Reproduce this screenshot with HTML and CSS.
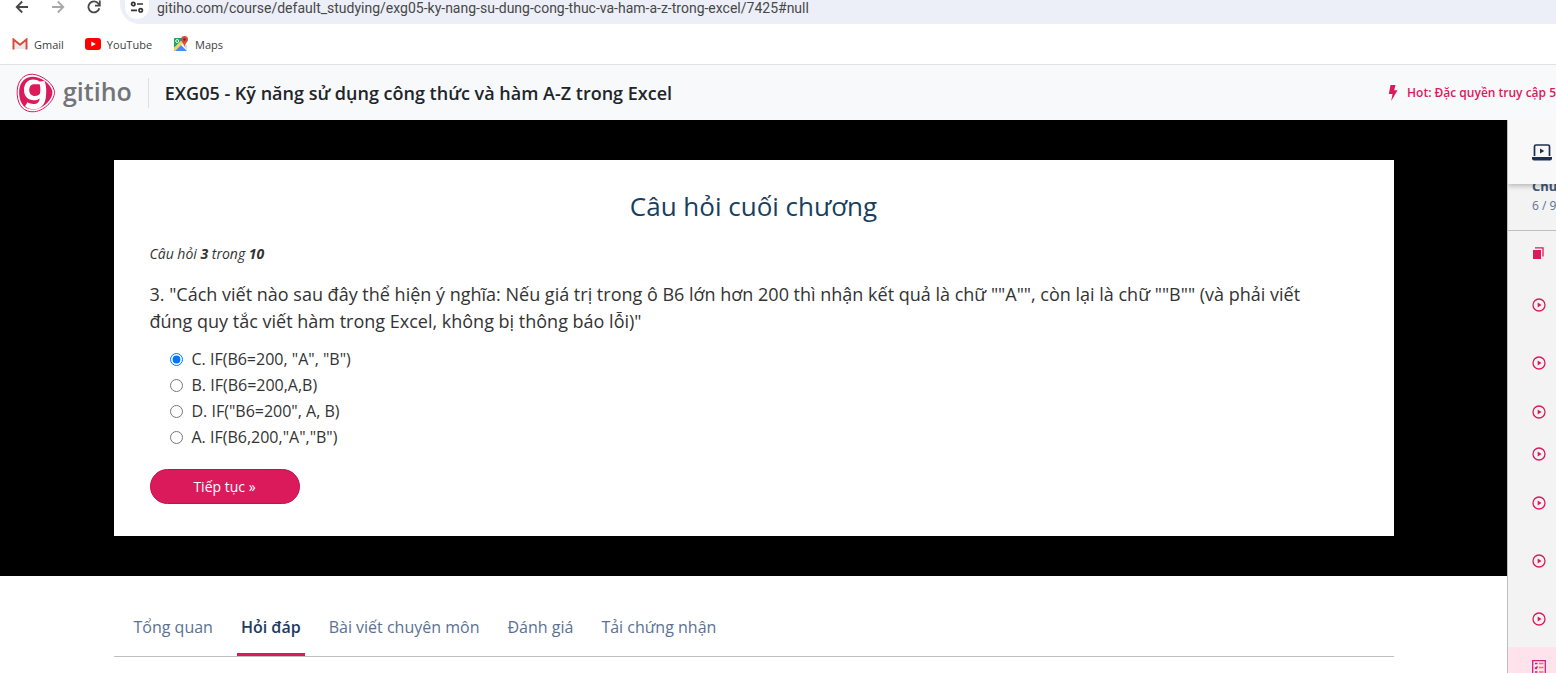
FILE: index.html
```
<!DOCTYPE html>
<html lang="vi">
<head>
  <meta charset="UTF-8">
  <meta name="viewport" content="width=device-width, initial-scale=1.0">
  <title>EXG05 - Kỹ năng sử dụng công thức và hàm A-Z trong Excel</title>
  <link rel="stylesheet" href="styles.css">
</head>
<body>

  <!-- shared icon -->
  <svg class="sprite" aria-hidden="true">
    <symbol id="play" viewBox="0 0 14 14">
      <circle cx="7" cy="7" r="6" fill="none" stroke="#db1a5b" stroke-width="1.3"/>
      <path d="M5.700 4.400 9.500 7 5.700 9.600z" fill="#db1a5b"/>
    </symbol>
  </svg>

  <div class="browser">
    <div class="toolbar">
      <button class="nav-btn" aria-label="Back">
        <svg width="14" height="14" viewBox="0 0 14 14" fill="none" stroke="#474747" stroke-width="1.8"><path d="M13 7H2M7.200 1.500 1.700 7l5.500 5.500"/></svg>
      </button>
      <button class="nav-btn" aria-label="Forward">
        <svg width="14" height="14" viewBox="0 0 14 14" fill="none" stroke="#a8a8a8" stroke-width="1.8"><path d="M1 7h11M6.800 1.500 12.300 7l-5.500 5.500"/></svg>
      </button>
      <button class="nav-btn" aria-label="Reload">
        <svg width="14" height="14" viewBox="0 0 14 14" fill="none" stroke="#474747" stroke-width="1.8"><path d="M12.300 8.200A5.500 5.500 0 1 1 11.400 3.700L12.600 5"/><path d="M12.800.6v5H8"/></svg>
      </button>
      <div class="address">
        <button class="site-info" aria-label="Site information">
          <svg width="14" height="14" viewBox="0 0 14 14" fill="none" stroke="#333" stroke-width="1.7"><circle cx="3.300" cy="4" r="1.700"/><path d="M7 4h6M1 10.300h6"/><circle cx="10.700" cy="10.300" r="1.700"/></svg>
        </button>
        <input class="url" type="text" aria-label="Address" value="gitiho.com/course/default_studying/exg05-ky-nang-su-dung-cong-thuc-va-ham-a-z-trong-excel/7425#null">
      </div>
    </div>
    <div class="bookmarks">
      <a href="#">
        <svg width="16" height="12" viewBox="0 0 16 12"><path d="M3 4v7h10V4L8 8z" fill="#eceaea"/><path d="M1.500 11.500V1.500L8 6.800l6.500-5.300v10" fill="none" stroke="#d54b3d" stroke-width="2"/></svg>
        Gmail
      </a>
      <a href="#">
        <svg width="16" height="12" viewBox="0 0 16 12"><rect width="16" height="12" rx="3" fill="#f00"/><path d="M6.300 3.400v5.200L10.800 6z" fill="#fff"/></svg>
        YouTube
      </a>
      <a href="#">
        <svg width="16" height="16" viewBox="0 0 16 16"><rect x="1" y="2" width="13" height="13" rx="1" fill="#fff"/><path d="M2 2h9L1 12V3a1 1 0 0 1 1-1z" fill="#1fa463"/><path d="M1 12 10.500 3l1.500 2L2 15H1z" fill="#ffd04b"/><path d="m2 15 6-6 6 6z" fill="#4889f4"/><path d="m9 8 2-1.500 3 3V14z" fill="#dadada"/><circle cx="4.200" cy="5" r="1.500" fill="none" stroke="#fff" stroke-width=".9"/><path d="M11.500 0A3.500 3.500 0 0 0 8 3.500C8 6.200 11 7 11.500 11 12 7 15 6.200 15 3.500A3.500 3.500 0 0 0 11.500 0z" fill="#d84c3e"/><circle cx="11.500" cy="3.500" r="1.300" fill="#7c2a20"/></svg>
        Maps
      </a>
    </div>
  </div>

  <header class="course-header">
    <a class="logo" href="#" aria-label="gitiho">
      <svg width="40" height="40" viewBox="0 0 40 40">
        <path d="M13 1.500C21-.5 36 8 38.300 17.500 40 26 29 37.500 18.500 38.700 8.500 39.500 2 33.500 1.200 21.500.6 10.500 5 3.300 13 1.500z" fill="#fff" stroke="#db1a5b" stroke-width="1"/>
        <path d="M14 4C22 2 34.500 9.500 36.300 18 37.500 25.500 28 35.500 18.500 36.500 10 37.300 4 32 3.200 21.500 2.700 11.500 6.500 5.700 14 4z" fill="#db1a5b"/>
        <path d="M17 6.500c2.800 0 5 .7 6.700 2L28.500 8c1.800 4 2 9 1.500 15-.6 8-4.500 13-12 13.300-3.500.1-6.500-.8-9-3l2.500-4c2 1.300 4 1.800 6.500 1.700 3.500-.1 5.300-2 5.700-5.600-1.600 1.300-3.600 1.900-5.700 1.900-6 0-10-4-10-10.300S11.500 6.500 17 6.500z" fill="#fff"/>
        <path d="M17.500 11.300h6.200c.8 3.200.8 6.500.2 9.500-1.200 1.400-3 2.200-5 2.200-3.300 0-5.700-2.300-5.700-6 0-3.300 1.600-5.500 4.300-5.700z" fill="#db1a5b"/>
      </svg>
      <span class="logo-text">gitiho</span>
    </a>
    <h1 class="course-title">EXG05 - Kỹ năng sử dụng công thức và hàm A-Z trong Excel</h1>
    <a class="hot" href="#">
      <svg width="10" height="16" viewBox="0 0 10 16"><path d="M2.500 0h5L6.200 5.200H9.500L3.200 16 4.500 9H.8z" fill="#db1a5b"/></svg>
      Hot: Đặc quyền truy cập 5
    </a>
  </header>

  <div class="layout">
    <main class="main">
      <section class="stage">
        <form class="quiz">
          <h2>Câu hỏi cuối chương</h2>
          <p class="progress">Câu hỏi <b>3</b> trong <b>10</b></p>
          <fieldset>
            <legend>3. "Cách viết nào sau đây thể hiện ý nghĩa: Nếu giá trị trong ô B6 lớn hơn 200 thì nhận kết quả là chữ ""A"", còn lại là chữ ""B"" (và phải viết đúng quy tắc viết hàm trong Excel, không bị thông báo lỗi)"</legend>
            <label><input type="radio" name="answer" checked> C. IF(B6=200, "A", "B")</label>
            <label><input type="radio" name="answer"> B. IF(B6=200,A,B)</label>
            <label><input type="radio" name="answer"> D. IF("B6=200", A, B)</label>
            <label><input type="radio" name="answer"> A. IF(B6,200,"A","B")</label>
          </fieldset>
          <button class="next" type="button">Tiếp tục »</button>
        </form>
      </section>
      <nav class="tabs">
        <a href="#">Tổng quan</a>
        <a href="#" class="active">Hỏi đáp</a>
        <a href="#">Bài viết chuyên môn</a>
        <a href="#">Đánh giá</a>
        <a href="#">Tải chứng nhận</a>
      </nav>
    </main>

    <aside class="sidebar">
      <div class="sidebar-head">
        <svg width="20" height="17" viewBox="0 0 20 17"><path d="M2.500 12V2.500A1.500 1.500 0 0 1 4 1h12a1.500 1.500 0 0 1 1.500 1.500V12" fill="none" stroke="#1f2f4d" stroke-width="1.700"/><path d="M0 13h20v1.500a2 2 0 0 1-2 2H2a2 2 0 0 1-2-2z" fill="#1f2f4d"/><path d="M8 4.500v5L12.300 7z" fill="#1f2f4d"/></svg>
      </div>
      <div class="chapter">
        <b>Chư</b>
        <span>6 / 9</span>
      </div>
      <ul class="lessons">
        <li><svg width="14" height="14" viewBox="0 0 14 14"><path d="M1 3h8v9H1z" fill="#db1a5b"/><path d="M3 .9h8v8.600" fill="none" stroke="#db1a5b" stroke-width="1.300"/></svg></li>
        <li class="long"><svg width="14" height="14"><use href="#play"/></svg></li>
        <li class="medium"><svg width="14" height="14"><use href="#play"/></svg></li>
        <li><svg width="14" height="14"><use href="#play"/></svg></li>
        <li><svg width="14" height="14"><use href="#play"/></svg></li>
        <li class="medium"><svg width="14" height="14"><use href="#play"/></svg></li>
        <li class="long"><svg width="14" height="14"><use href="#play"/></svg></li>
        <li class="medium"><svg width="14" height="14"><use href="#play"/></svg></li>
        <li class="current"><svg width="14" height="16" viewBox="0 0 14 16" fill="none"><path d="M.7.7h12.600v14.600H.7z" stroke="#d11c86" stroke-width="1.300"/><path d="M3 3.500h2.500M3 7.500l1 1 1.500-2M3 12h2.500" stroke="#db1a5b" stroke-width="1.500"/><path d="M7 3.500h4.500M7 7.500h4.500M7 12h4.500" stroke="#e2777a" stroke-width="1.300"/></svg></li>
      </ul>
    </aside>
  </div>

</body>
</html>
```

FILE: styles.css
```
* {
  box-sizing: border-box;
}
body {
  margin: 0;
  height: 100vh;
  display: flex;
  flex-direction: column;
  overflow: hidden;
  background-color: #fff;
  font-family: "Open Sans", "Noto Sans", sans-serif;
  font-size: 16px;
  color: #333;
}
a {
  color: inherit;
  text-decoration: none;
}
button {
  font-family: inherit;
  border: none;
  cursor: pointer;
}
svg {
  display: block;
  flex-shrink: 0;
}
.sprite {
  display: none;
}

/* browser bar */
.browser {
  flex-shrink: 0;
  border-bottom: 1px solid #dfe1e3;
}
.toolbar {
  display: flex;
  height: 24px;
  padding-left: 4px;
}
.nav-btn {
  display: flex;
  align-items: center;
  justify-content: center;
  width: 36px;
  height: 14px;
  padding: 0;
  background: none;
}
.address {
  flex: 1;
  display: flex;
  align-items: flex-start;
  margin-left: 8px;
  padding-left: 5px;
  background-color: #eceff8;
  border-radius: 0 0 0 20px;
}
.site-info {
  display: flex;
  justify-content: center;
  width: 24px;
  height: 19px;
  padding: 0;
  background-color: #fff;
  border-radius: 0 0 12px 12px;
}
.url {
  flex: 1;
  height: 16px;
  margin-left: 8px;
  padding: 0;
  border: none;
  background: none;
  font-family: Roboto, sans-serif;
  font-size: 14px;
  color: #474747;
}
.bookmarks {
  display: flex;
  align-items: center;
  gap: 21px;
  height: 40px;
  padding-left: 12px;
  font-size: 11px;
  color: #3c4043;
}
.bookmarks a {
  display: flex;
  align-items: center;
  gap: 6px;
}

/* course header */
.course-header {
  flex-shrink: 0;
  display: flex;
  align-items: center;
  height: 55px;
  padding-left: 16px;
  background-color: #f8f9fb;
  white-space: nowrap;
}
.logo {
  display: flex;
  align-items: center;
  gap: 7px;
  height: 30px;
  padding-right: 16px;
  border-right: 1px solid #dcdfe3;
}
.logo-text {
  padding-bottom: 4px;
  font-size: 25px;
  font-weight: 600;
  color: #737478;
}
.course-title {
  margin: 0 0 0 16px;
  font-size: 18px;
  font-weight: 600;
  color: #212529;
}
.hot {
  display: flex;
  align-items: center;
  gap: 9px;
  margin-left: auto;
  font-size: 12px;
  font-weight: 600;
  color: #db1a5b;
}

/* content */
.layout {
  flex: 1;
  display: flex;
  min-height: 0;
}
.main {
  flex: 1;
  min-width: 0;
}
.stage {
  padding: 40px 0;
  background-color: #000;
}
.quiz {
  max-width: 1280px;
  margin: 0 auto;
  padding: 28px 36px 32px;
  background-color: #fff;
}
.quiz h2 {
  margin: 0 0 20px;
  font-size: 26px;
  font-weight: 400;
  line-height: 36px;
  text-align: center;
  color: #17405f;
}
.progress {
  margin: 0 0 17px;
  font-size: 14px;
  font-style: italic;
  line-height: 20px;
}
.quiz fieldset {
  margin: 0 0 19px;
  padding: 0;
  border: none;
}
.quiz legend {
  padding: 0 40px 0 0;
  margin-bottom: 11px;
  font-size: 18px;
  line-height: 27px;
}
.quiz label {
  display: flex;
  align-items: center;
  gap: 9px;
  padding-left: 20px;
  font-size: 16px;
  line-height: 26px;
}
.quiz input {
  width: 13px;
  height: 13px;
  margin: 0;
  accent-color: #0075ff;
}
.next {
  display: block;
  width: 150px;
  height: 35px;
  border: 1px solid #c0124b;
  border-radius: 18px;
  background-color: #db1a5b;
  font-size: 14px;
  color: #fff;
}
.tabs {
  display: flex;
  gap: 20px;
  max-width: 1280px;
  margin: 25px auto 0;
  padding-left: 16px;
  border-bottom: 1px solid #bfbfbf;
  font-size: 16px;
  line-height: 52px;
  color: #5b7193;
}
.tabs a {
  padding: 0 4px;
  border-bottom: 3px solid transparent;
}
.tabs .active {
  border-color: #db1a5b;
  font-weight: 600;
  color: #1f3a5f;
}

/* lesson list */
.sidebar {
  width: 49px;
  overflow: hidden;
  border-left: 1px solid #bfbfbf;
  background-color: #f3f3f3;
}
.sidebar-head {
  position: relative;
  display: flex;
  align-items: center;
  height: 64px;
  padding-left: 24px;
  background-color: #f8f8f8;
  box-shadow: 0 2px 5px rgba(0, 0, 0, 0.25);
}
.chapter {
  display: flex;
  flex-direction: column;
  justify-content: flex-end;
  height: 47px;
  padding: 0 0 14px 24px;
  overflow: hidden;
  border-bottom: 1px solid #bfbfbf;
  font-size: 12px;
  line-height: 20px;
  white-space: nowrap;
  color: #5b7193;
}
.chapter b {
  font-size: 13px;
  color: #3f5674;
}
.lessons {
  margin: 0;
  padding: 2px 0 0;
  list-style: none;
}
.lessons li {
  display: flex;
  align-items: center;
  height: 42px;
  padding-left: 24px;
}
.lessons .medium {
  height: 56px;
}
.lessons .long {
  height: 60px;
}
.lessons .current {
  background-color: #ffe3ec;
}
```
